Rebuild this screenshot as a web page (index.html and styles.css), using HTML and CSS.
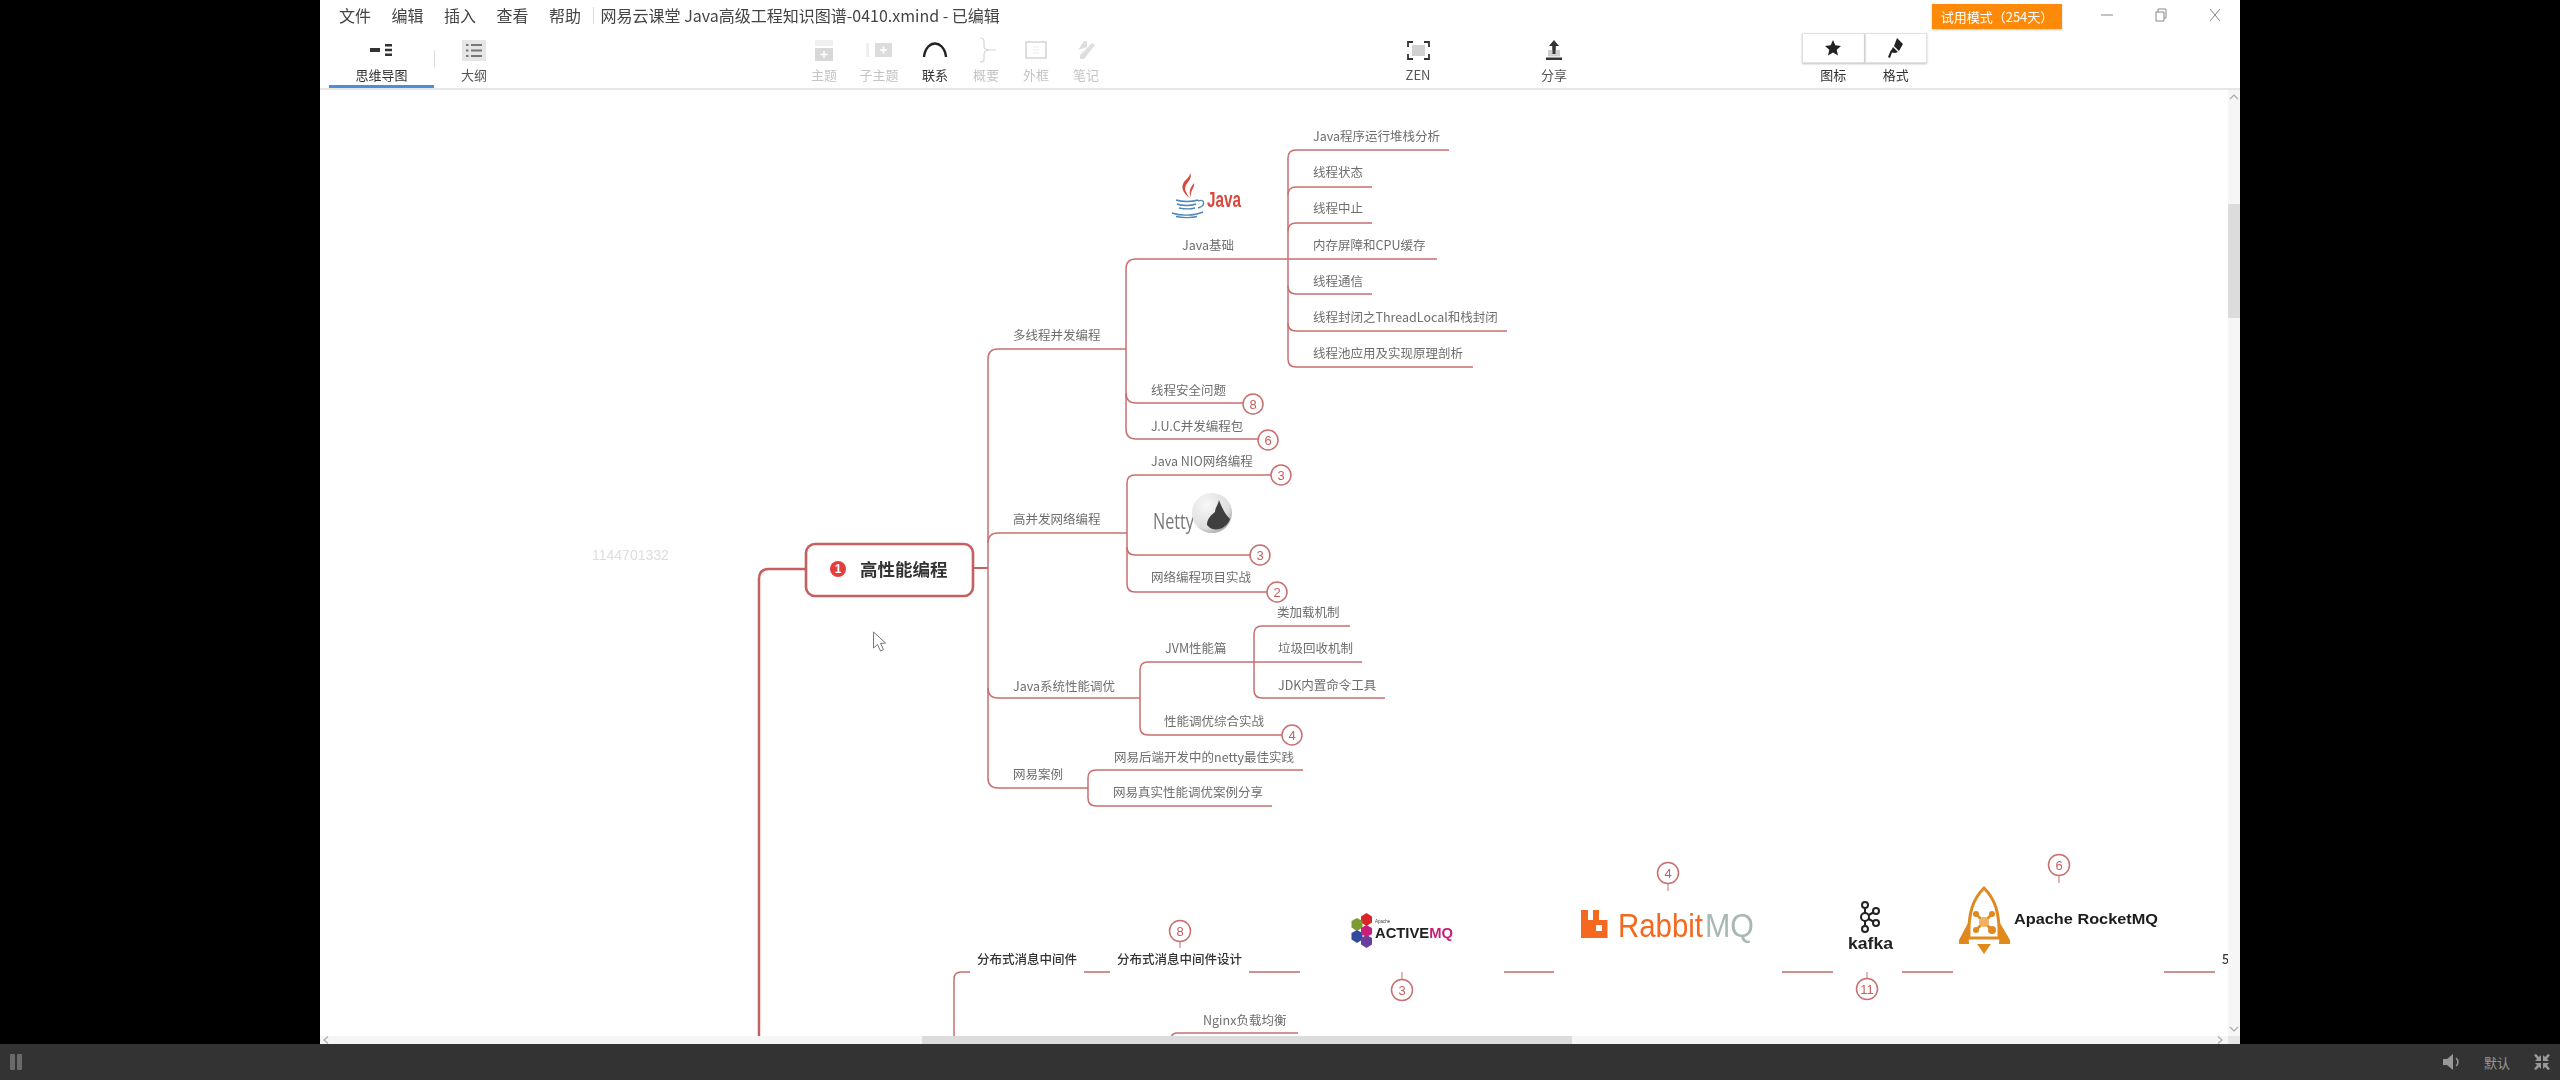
FILE: index.html
```html
<!DOCTYPE html>
<html lang="zh">
  <head>
    <meta charset="utf-8">
    <title>网易云课堂 Java高级工程知识图谱-0410.xmind - 已编辑</title>
    <link rel="stylesheet" href="styles.css">
  </head>
  <body>
    <div class="stage">
      <div class="app">

        <div class="titlebar">
          <span class="menu-item">文件</span>
          <span class="menu-item">编辑</span>
          <span class="menu-item">插入</span>
          <span class="menu-item">查看</span>
          <span class="menu-item">帮助</span>
          <span class="title-sep"></span>
          <span class="doc-title">网易云课堂 Java高级工程知识图谱-0410.xmind - 已编辑</span>
          <span class="trial">试用模式（254天）</span>
          <span class="win-btn">
            <svg width="14" height="14" viewBox="0 0 14 14"><path d="M1 7H13" class="win-glyph"/></svg>
          </span>
          <span class="win-btn">
            <svg width="14" height="14" viewBox="0 0 14 14"><path d="M2 4H10V13H2ZM4 4V1H12V10H10" class="win-glyph"/></svg>
          </span>
          <span class="win-btn">
            <svg width="14" height="14" viewBox="0 0 14 14"><path d="M2 1L12 13M12 1L2 13" class="win-glyph"/></svg>
          </span>
        </div>

        <div class="toolbar">
          <div class="tool tab-active">
            <span class="tool-icon">
              <svg width="24" height="12" viewBox="0 0 24 12"><path d="M0 4H10V8H0ZM15 0H22V2.4H15ZM15 4.8H22V7.2H15ZM15 9.6H22V12H15Z" fill="#333"/></svg>
            </span>
            <span class="tool-label">思维导图</span>
          </div>
          <span class="tool-sep"></span>
          <div class="tool tool-outline">
            <span class="tool-icon">
              <svg width="24" height="21" viewBox="0 0 24 21"><rect width="24" height="21" fill="#e6e6e6"/><path d="M4 4H6.500V6H4ZM9 4H20V6H9ZM4 9.500H6.500V11.500H4ZM9 9.500H20V11.500H9ZM4 15H6.500V17H4ZM9 15H20V17H9Z" fill="#777"/></svg>
            </span>
            <span class="tool-label">大纲</span>
          </div>

          <div class="tool tool-off tool-topic">
            <span class="tool-icon">
              <svg width="18" height="21" viewBox="0 0 18 21"><rect y="0" width="18" height="6" fill="#f0f0f0"/><rect y="8" width="18" height="13" fill="#d8d8d8"/><path d="M9 11V18M5.500 14.500H12.500" stroke="#fff" stroke-width="1.500"/></svg>
            </span>
            <span class="tool-label">主题</span>
          </div>
          <div class="tool tool-off tool-wide">
            <span class="tool-icon">
              <svg width="26" height="14" viewBox="0 0 26 14"><rect width="3" height="14" fill="#eee"/><rect x="9" width="17" height="14" fill="#dcdcdc"/><path d="M17.500 3.500V10.500M14 7H21" stroke="#fff" stroke-width="1.500"/></svg>
            </span>
            <span class="tool-label">子主题</span>
          </div>
          <div class="tool tool-link">
            <span class="tool-icon">
              <svg width="26" height="16" viewBox="0 0 26 16"><path d="M2 15C3 5 9 1.500 13 1.500S23 5 24 15" fill="none" stroke="#222" stroke-width="2.400"/></svg>
            </span>
            <span class="tool-label">联系</span>
          </div>
          <div class="tool tool-off">
            <span class="tool-icon">
              <svg width="22" height="26" viewBox="0 0 22 26"><path d="M5 1C10 1 9 4 9 8S9 12 14 13C9 14 9 15 9 19S10 25 5 25M14 13H21" fill="none" stroke="#d4d4d4" stroke-width="1.200"/></svg>
            </span>
            <span class="tool-label">概要</span>
          </div>
          <div class="tool tool-off">
            <span class="tool-icon">
              <svg width="22" height="18" viewBox="0 0 22 18"><rect x="1" y="1" width="20" height="16" fill="none" stroke="#d4d4d4" stroke-width="1.500"/><path d="M8 6H14M8 9H14M8 12H14" stroke="#ececec"/></svg>
            </span>
            <span class="tool-label">外框</span>
          </div>
          <div class="tool tool-off">
            <span class="tool-icon">
              <svg width="20" height="20" viewBox="0 0 20 20"><path d="M2 10L8 1H11V7ZM16 3L19 5L8 19H4V15Z" fill="#dedede"/></svg>
            </span>
            <span class="tool-label">笔记</span>
          </div>

          <div class="tool tool-zen">
            <span class="tool-icon">
              <svg width="23" height="19" viewBox="0 0 23 19"><rect x="5" y="4" width="13" height="11" fill="#d0d0d0"/><path d="M1 6V1H6M17 1H22V6M22 13V18H17M6 18H1V13" fill="none" stroke="#333" stroke-width="1.800"/></svg>
            </span>
            <span class="tool-label">ZEN</span>
          </div>
          <div class="tool tool-share">
            <span class="tool-icon">
              <svg width="16" height="20" viewBox="0 0 16 20"><path d="M8 0L13 6H9.500V13H6.500V6H3Z" fill="#333"/><rect x="2" y="10" width="12" height="6.500" fill="#cfcfcf"/><path d="M6.500 6H9.500V14H6.500Z" fill="#333"/><rect y="17.500" width="16" height="2.500" fill="#333"/></svg>
            </span>
            <span class="tool-label">分享</span>
          </div>

          <div class="tool-group">
            <div class="group-cell">
              <span class="group-icon">
                <svg width="16" height="16" viewBox="0 0 16 16"><path d="M8 0L10.300 5.300L16 5.900L11.700 9.700L13 15.500L8 12.500L3 15.500L4.300 9.700L0 5.900L5.700 5.300Z" fill="#222"/></svg>
              </span>
              <span class="tool-label">图标</span>
            </div>
            <div class="group-cell">
              <span class="group-icon">
                <svg width="16" height="20" viewBox="0 0 16 20"><path d="M9 0L15 6L11 13L6 8ZM5 9L10 14L7 15L4 14.500L2 20L0 19L2.500 13L4 11Z" fill="#222"/></svg>
              </span>
              <span class="tool-label">格式</span>
            </div>
          </div>
        </div>

        <div class="workspace">
          <div class="map">
            <svg class="map-svg" width="1908" height="946" viewBox="320 90 1908 946">
              <defs>
                <radialGradient id="nettyBall" cx="35%" cy="30%" r="80%">
                  <stop offset="0" stop-color="#f7f7f7"/>
                  <stop offset=".72" stop-color="#dedede"/>
                  <stop offset="1" stop-color="#9a9a9a"/>
                </radialGradient>
              </defs>

              <!-- watermark -->
              <text x="592" y="560" class="watermark">1144701332</text>

              <!-- root branch -->
              <path class="line-main" d="M806 569H769Q759 569 759 579V1040"/>
              <path class="line-root" d="M973 568H988"/>
              <rect class="root-box" x="806" y="544" width="167" height="52" rx="9"/>
              <circle cx="838" cy="569" r="8" fill="#e53e3e"/>
              <text x="838" y="569" class="root-badge">1</text>
              <text x="860" y="568" class="root-text">高性能编程</text>

              <!-- second level -->
              <path class="line" d="M1126 349H998Q988 349 988 359V778Q988 788 998 788H1088"/>
              <path class="line" d="M988 543Q988 533 998 533H1127"/>
              <path class="line" d="M988 688Q988 698 998 698H1140"/>
              <text x="1013" y="335" class="topic">多线程并发编程</text>
              <text x="1013" y="519" class="topic">高并发网络编程</text>
              <text x="1013" y="686" class="topic">Java系统性能调优</text>
              <text x="1013" y="774" class="topic">网易案例</text>

              <!-- multithreading -->
              <path class="line" d="M1288 259H1136Q1126 259 1126 269V429Q1126 439 1136 439H1258"/>
              <path class="line" d="M1126 393Q1126 403 1136 403H1243"/>
              <text x="1182" y="245" class="topic">Java基础</text>
              <text x="1151" y="390" class="topic">线程安全问题</text>
              <text x="1151" y="426" class="topic">J.U.C并发编程包</text>
              <circle cx="1253" cy="404" r="10" class="badge"/>
              <text x="1253" y="404" class="badge-num">8</text>
              <circle cx="1268" cy="440" r="10" class="badge"/>
              <text x="1268" y="440" class="badge-num">6</text>

              <!-- java basics -->
              <path class="line" d="M1449 150H1296Q1288 150 1288 158V359Q1288 367 1296 367H1473"/>
              <path class="line" d="M1288 195Q1288 187 1296 187H1372"/>
              <path class="line" d="M1288 231Q1288 223 1296 223H1372"/>
              <path class="line" d="M1288 259H1437"/>
              <path class="line" d="M1288 286Q1288 294 1296 294H1372"/>
              <path class="line" d="M1288 323Q1288 331 1296 331H1507"/>
              <text x="1313" y="136" class="topic">Java程序运行堆栈分析</text>
              <text x="1313" y="172" class="topic">线程状态</text>
              <text x="1313" y="208" class="topic">线程中止</text>
              <text x="1313" y="245" class="topic">内存屏障和CPU缓存</text>
              <text x="1313" y="281" class="topic">线程通信</text>
              <text x="1313" y="317" class="topic">线程封闭之ThreadLocal和栈封闭</text>
              <text x="1313" y="353" class="topic">线程池应用及实现原理剖析</text>

              <!-- java logo -->
              <g class="java-logo">
                <path class="java-steam" d="M1190 173C1194 180 1182 184 1186 192C1187 194 1188 196 1190 198C1184 194 1180 188 1184 182C1186 179 1190 177 1190 173ZM1194 183C1195 188 1190 190 1191 197C1189 193 1189 189 1194 183Z"/>
                <path class="java-cup" d="M1176 200C1182 202 1192 202 1198 200M1177 204C1182 206 1191 206 1196 204M1179 208C1184 209 1191 209 1195 208M1198 201C1205 198 1206 206 1198 208M1172 213C1180 216 1194 216 1203 212M1176 216.500C1182 218 1192 218 1197 216.500"/>
                <text x="1207" y="207" class="java-word" textLength="34" lengthAdjust="spacingAndGlyphs">Java</text>
              </g>

              <!-- network -->
              <path class="line" d="M1271 475H1135Q1127 475 1127 483V584Q1127 592 1135 592H1267"/>
              <path class="line" d="M1127 547Q1127 555 1135 555H1250"/>
              <text x="1151" y="461" class="topic">Java NIO网络编程</text>
              <text x="1151" y="577" class="topic">网络编程项目实战</text>
              <circle cx="1281" cy="475" r="10" class="badge"/>
              <text x="1281" y="475" class="badge-num">3</text>
              <circle cx="1260" cy="555" r="10" class="badge"/>
              <text x="1260" y="555" class="badge-num">3</text>
              <circle cx="1277" cy="592" r="10" class="badge"/>
              <text x="1277" y="592" class="badge-num">2</text>

              <!-- netty logo -->
              <text x="1153" y="529" class="netty-word" textLength="41" lengthAdjust="spacingAndGlyphs">Netty</text>
              <circle cx="1212" cy="513" r="20" fill="url(#nettyBall)"/>
              <path d="M1219 500C1218 505 1215 508 1215 512C1211 515 1207 519 1207 525C1213 533 1226 530 1230 519C1225 514 1222 508 1219 500Z" fill="#3f3f3f"/>

              <!-- jvm tuning -->
              <path class="line" d="M1254 662H1148Q1140 662 1140 670V727Q1140 735 1148 735H1282"/>
              <path class="line" d="M1350 626H1262Q1254 626 1254 634V690Q1254 698 1262 698H1385"/>
              <path class="line" d="M1254 662H1362"/>
              <text x="1165" y="648" class="topic">JVM性能篇</text>
              <text x="1164" y="721" class="topic">性能调优综合实战</text>
              <text x="1277" y="612" class="topic">类加载机制</text>
              <text x="1278" y="648" class="topic">垃圾回收机制</text>
              <text x="1278" y="685" class="topic">JDK内置命令工具</text>
              <circle cx="1292" cy="735" r="10" class="badge"/>
              <text x="1292" y="735" class="badge-num">4</text>

              <!-- netease cases -->
              <path class="line" d="M1303 770H1096Q1088 770 1088 778V798Q1088 806 1096 806H1272"/>
              <text x="1114" y="757" class="topic">网易后端开发中的netty最佳实践</text>
              <text x="1113" y="792" class="topic">网易真实性能调优案例分享</text>

              <!-- mq row -->
              <path class="line" d="M970 972H961Q954 972 954 979V1040"/>
              <path class="line" d="M1298 1033H1177Q1171 1033 1171 1040"/>
              <path class="line-seg" d="M1084 972H1110M1249 972H1300M1504 972H1554M1782 972H1833M1902 972H1953M2164 972H2215"/>
              <text x="977" y="958" class="topic-strong">分布式消息中间件</text>
              <text x="1117" y="958" class="topic-strong">分布式消息中间件设计</text>
              <text x="1203" y="1020" class="topic">Nginx负载均衡</text>
              <text x="2222" y="958" class="topic-strong">5</text>

              <path class="line-thin" d="M1180 942V948M1402 972V980M1668 884V891M1867 972V979M2059 876V883"/>
              <circle cx="1180" cy="931" r="10.500" class="badge"/>
              <text x="1180" y="931" class="badge-num">8</text>
              <circle cx="1402" cy="990" r="10.500" class="badge"/>
              <text x="1402" y="990" class="badge-num">3</text>
              <circle cx="1668" cy="873" r="10.500" class="badge"/>
              <text x="1668" y="873" class="badge-num">4</text>
              <circle cx="1867" cy="989" r="10.500" class="badge"/>
              <text x="1867" y="989" class="badge-num">11</text>
              <circle cx="2059" cy="865" r="10.500" class="badge"/>
              <text x="2059" y="865" class="badge-num">6</text>

              <!-- activemq logo -->
              <path d="M1366.500 913L1372 916.500V922.500L1366.500 926L1361 922.500V916.500Z" fill="#d8262c"/>
              <path d="M1357 918L1362.500 921V927.500L1357 931L1351.500 927.500V921Z" fill="#7b9c2e"/>
              <path d="M1357 930L1362.500 933V939.500L1357 943L1351.500 939.500V933Z" fill="#33499c"/>
              <path d="M1366.500 935L1372 938V944.500L1366.500 948L1361 944.500V938Z" fill="#6a3ea1"/>
              <path d="M1366.500 925L1372 928V934L1366.500 937L1361 934V928Z" fill="#c81e78"/>
              <text x="1375" y="923" class="amq-small">Apache</text>
              <text x="1375" y="938" class="amq-word" textLength="78" lengthAdjust="spacingAndGlyphs">ACTIVE<tspan class="amq-mq">MQ</tspan></text>

              <!-- rabbitmq logo -->
              <path fill-rule="evenodd" fill="#f4691f" d="M1581 910H1588V920H1593V910H1599V920H1607.500V938H1581ZM1596 925V931H1602V925Z"/>
              <text x="1618" y="938" class="rabbit-word" textLength="85" lengthAdjust="spacingAndGlyphs">Rabbit</text>
              <text x="1705" y="938" class="rabbit-mq" textLength="49" lengthAdjust="spacingAndGlyphs">MQ</text>

              <!-- kafka logo -->
              <path d="M1865 905V929M1865 917L1876 911M1865 917L1876 923" fill="none" stroke="#222" stroke-width="2"/>
              <circle cx="1865" cy="905" r="3" class="kafka-node"/>
              <circle cx="1865" cy="917" r="4" class="kafka-node"/>
              <circle cx="1865" cy="929" r="3" class="kafka-node"/>
              <circle cx="1876" cy="911" r="3" class="kafka-node"/>
              <circle cx="1876" cy="923" r="3" class="kafka-node"/>
              <text x="1848" y="949" class="kafka-word" textLength="45" lengthAdjust="spacingAndGlyphs">kafka</text>

              <!-- rocketmq logo -->
              <path d="M1984 888C1973 899 1968 913 1969 938H1999C2000 913 1995 899 1984 888Z" fill="#fff" stroke="#e08a1e" stroke-width="3"/>
              <path d="M1968 923L1959 940V944H1969ZM2000 923L2010 940V944H1999ZM1977 944H1991L1984 954Z" fill="#e08a1e"/>
              <path d="M1976 914L1992 930M1992 914L1976 930" stroke="#e08a1e" stroke-width="2.500"/>
              <circle cx="1976" cy="914" r="3" fill="#e08a1e"/>
              <circle cx="1992" cy="914" r="3" fill="#e08a1e"/>
              <circle cx="1976" cy="930" r="3" fill="#e08a1e"/>
              <circle cx="1992" cy="930" r="4" fill="#e08a1e"/>
              <circle cx="1984" cy="922" r="5" fill="#f0b060"/>
              <text x="2014" y="924" class="rocket-word" textLength="144" lengthAdjust="spacingAndGlyphs">Apache RocketMQ</text>

              <!-- mouse pointer -->
              <path d="M873.500 632V648L877.500 644.500L880.500 651L883.500 649.500L880.500 643.500L885.500 643Z" fill="#fff" stroke="#777" stroke-width="1"/>
            </svg>
          </div>

          <div class="vscroll">
            <svg class="scroll-up" width="10" height="6" viewBox="0 0 10 6"><path d="M1 5L5 1L9 5" class="scroll-glyph"/></svg>
            <span class="vthumb"></span>
            <svg class="scroll-down" width="10" height="6" viewBox="0 0 10 6"><path d="M1 1L5 5L9 1" class="scroll-glyph"/></svg>
          </div>
          <div class="hscroll">
            <svg class="scroll-left" width="6" height="8" viewBox="0 0 6 8"><path d="M5 0.500L1 4L5 7.500" class="scroll-glyph"/></svg>
            <span class="hthumb"></span>
            <svg class="scroll-right" width="6" height="8" viewBox="0 0 6 8"><path d="M1 0.500L5 4L1 7.500" class="scroll-glyph"/></svg>
          </div>
          <div class="scroll-corner"></div>
        </div>
      </div>
    </div>

    <div class="controls">
      <span class="pause"><i></i><i></i></span>
      <span class="controls-space"></span>
      <svg class="ctl-sound" width="17" height="16" viewBox="0 0 17 16"><path d="M0 5H4L10 0V16L4 11H0Z" fill="#999"/><path d="M13 4C15.500 6 15.500 10 13 12" fill="none" stroke="#999" stroke-width="1.500"/></svg>
      <span class="ctl-rate">默认</span>
      <svg class="ctl-full" width="16" height="16" viewBox="0 0 16 16"><path d="M0 1L2 0L5 3L7 1V7H1L3 5ZM16 1L14 0L11 3L9 1V7H15L13 5ZM0 15L2 16L5 13L7 15V9H1L3 11ZM16 15L14 16L11 13L9 15V9H15L13 11Z" fill="#999"/></svg>
    </div>
  </body>
</html>
```

FILE: styles.css
```css
body {
  margin: 0;
  height: 1080px;
  display: flex;
  flex-direction: column;
  overflow: hidden;
  background-color: #000;
  font-family: "Noto Sans CJK SC", "Liberation Sans", sans-serif;
}

.stage {
  flex: 1;
  min-height: 0;
  display: flex;
  justify-content: center;
}

.app {
  width: 1920px;
  display: flex;
  flex-direction: column;
  background-color: #fff;
  filter: blur(0.7px);
}

/* title bar */
.titlebar {
  height: 30px;
  padding-left: 19px;
  display: flex;
  align-items: center;
  font-size: 16px;
  color: #444;
}

.menu-item {
  margin-right: 20.5px;
}

.title-sep {
  width: 1px;
  height: 17px;
  margin-left: -9px;
  margin-right: 7px;
  background-color: #ddd;
}

.doc-title {
  flex: 1;
  font-size: 16px;
}

.trial {
  width: 130px;
  height: 25px;
  margin-right: 16px;
  margin-top: 3px;
  background-color: #ff8a0a;
  color: #fff;
  font-size: 13px;
  line-height: 25px;
  text-align: center;
  box-shadow: 0 1px 2px rgba(0, 0, 0, 0.2);
}

.win-btn {
  width: 50px;
  margin-left: 4px;
  display: flex;
  justify-content: center;
}

.win-btn svg {
  display: block;
}

.win-glyph {
  fill: none;
  stroke: #888;
  stroke-width: 1;
}

/* toolbar */
.toolbar {
  height: 60px;
  box-sizing: border-box;
  padding-left: 9px;
  display: flex;
  border-bottom: 2px solid #e6e6e6;
}

.tool {
  width: 50px;
  display: flex;
  flex-direction: column;
  align-items: center;
  padding-top: 6px;
  color: #555;
}

.tool-icon {
  height: 28px;
  display: flex;
  align-items: center;
  justify-content: center;
}

.tool-label {
  margin-top: 3px;
  font-size: 13px;
  line-height: 16px;
}

.tab-active {
  width: 105px;
  border-bottom: 3px solid #4a90d9;
  box-sizing: border-box;
  color: #333;
}

.tool-sep {
  width: 1px;
  height: 17px;
  margin-top: 20px;
  background-color: #ddd;
}

.tool-outline {
  width: 54px;
  margin-left: 12px;
}

.tool-off {
  color: #c4c4c4;
}

.tool-topic {
  margin-left: 298px;
}

.tool-wide {
  width: 60px;
}

.tool-link {
  width: 52px;
  color: #333;
}

.tool-zen {
  margin-left: 282px;
}

.tool-share {
  margin-left: 86px;
}

.tool-group {
  margin-left: 223px;
  margin-top: 3px;
  display: flex;
}

.group-cell {
  width: 62.5px;
  display: flex;
  flex-direction: column;
  align-items: center;
  color: #333;
}

.group-icon {
  width: 100%;
  height: 30px;
  display: flex;
  align-items: center;
  justify-content: center;
  border: 1px solid #e2e2e2;
  box-sizing: border-box;
  margin-bottom: 1px;
  box-shadow: 0 1px 2px rgba(0, 0, 0, 0.25);
}

/* workspace */
.workspace {
  flex: 1;
  min-height: 0;
  display: grid;
  grid-template-columns: 1fr 12px;
  grid-template-rows: 1fr 8px;
}

.map {
  overflow: hidden;
}

.map-svg {
  display: block;
}

.vscroll {
  position: relative;
  background-color: #f6f6f6;
}

.vthumb {
  display: block;
  height: 114px;
  margin-top: 114px;
  background-color: #dcdcdc;
}

.hscroll {
  position: relative;
  background-color: #f6f6f6;
}

.hthumb {
  display: block;
  width: 650px;
  height: 8px;
  margin-left: 602px;
  background-color: #dcdcdc;
}

.scroll-corner {
  background-color: #e6e6e6;
}

.scroll-glyph {
  fill: none;
  stroke: #aaa;
  stroke-width: 1.2;
}

.scroll-up {
  position: absolute;
  top: 4px;
  left: 1px;
}

.scroll-down {
  position: absolute;
  bottom: 4px;
  left: 1px;
}

.scroll-left {
  position: absolute;
  top: 0;
  left: 3px;
}

.scroll-right {
  position: absolute;
  top: 0;
  right: 5px;
}

/* mind map */
.line {
  fill: none;
  stroke: #c96f6f;
  stroke-width: 1.5;
}

.line-main {
  fill: none;
  stroke: #c65f5f;
  stroke-width: 2.5;
}

.line-root {
  fill: none;
  stroke: #c65f5f;
  stroke-width: 2;
}

.line-seg {
  fill: none;
  stroke: #cf9090;
  stroke-width: 2;
}

.line-thin {
  fill: none;
  stroke: #c96f6f;
  stroke-width: 1;
}

.root-box {
  fill: #fff;
  stroke: #c65f5f;
  stroke-width: 2.6;
}

.root-badge {
  fill: #fff;
  font-family: "Liberation Sans", sans-serif;
  font-size: 12px;
  font-weight: 700;
  text-anchor: middle;
  dominant-baseline: central;
}

.root-text {
  fill: #333;
  font-size: 17.5px;
  font-weight: 700;
  dominant-baseline: central;
}

.topic {
  fill: #6e6e6e;
  font-size: 12.5px;
  dominant-baseline: central;
  transform: translateY(-1px);
}

.topic-strong {
  fill: #333;
  font-size: 12.5px;
  font-weight: 500;
  dominant-baseline: central;
}

.badge {
  fill: #fff;
  stroke: #c96f6f;
  stroke-width: 1.5;
}

.badge-num {
  fill: #c46060;
  font-family: "Liberation Sans", sans-serif;
  font-size: 13px;
  text-anchor: middle;
  dominant-baseline: central;
}

.watermark {
  fill: #dedede;
  font-family: "Liberation Sans", sans-serif;
  font-size: 14px;
}

/* logos */
.java-steam {
  fill: #d9483b;
}

.java-cup {
  fill: none;
  stroke: #4f87b8;
  stroke-width: 1.4;
}

.java-word {
  fill: #d9483b;
  font-family: "Liberation Sans", sans-serif;
  font-size: 22px;
  font-weight: 700;
}

.netty-word {
  fill: #777;
  font-family: "Open Sans", sans-serif;
  font-size: 22px;
  font-weight: 400;
}

.amq-small {
  fill: #444;
  font-family: "Liberation Sans", sans-serif;
  font-size: 4.5px;
}

.amq-word {
  fill: #222;
  font-family: "Liberation Sans", sans-serif;
  font-size: 15px;
  font-weight: 700;
}

.amq-mq {
  fill: #c81e78;
}

.rabbit-word {
  fill: #f4691f;
  font-family: "Liberation Sans Narrow", "Liberation Sans", sans-serif;
  font-size: 29px;
  transform-box: fill-box;
  transform-origin: left bottom;
  transform: scaleY(1.14);
}

.rabbit-mq {
  fill: #a9b7b5;
  font-family: "Liberation Sans Narrow", "Liberation Sans", sans-serif;
  font-size: 29px;
  transform-box: fill-box;
  transform-origin: left bottom;
  transform: scaleY(1.14);
}

.kafka-node {
  fill: #fff;
  stroke: #222;
  stroke-width: 2;
}

.kafka-word {
  fill: #222;
  font-family: "Liberation Sans", sans-serif;
  font-size: 17px;
  font-weight: 700;
}

.rocket-word {
  fill: #1c1c1c;
  font-family: "Liberation Sans", sans-serif;
  font-size: 15.5px;
  font-weight: 700;
}

/* player bar */
.controls {
  height: 36px;
  flex-shrink: 0;
  display: flex;
  align-items: center;
  padding-left: 10px;
  background-color: #333;
  color: #999;
}

.pause {
  display: flex;
  gap: 2px;
}

.pause i {
  width: 5px;
  height: 16px;
  border-radius: 1px;
  background-color: #6a6a6a;
}

.controls-space {
  flex: 1;
}

.ctl-rate {
  margin-left: 24px;
  font-size: 13px;
}

.ctl-full {
  margin-left: 24px;
  margin-right: 10px;
}
```
